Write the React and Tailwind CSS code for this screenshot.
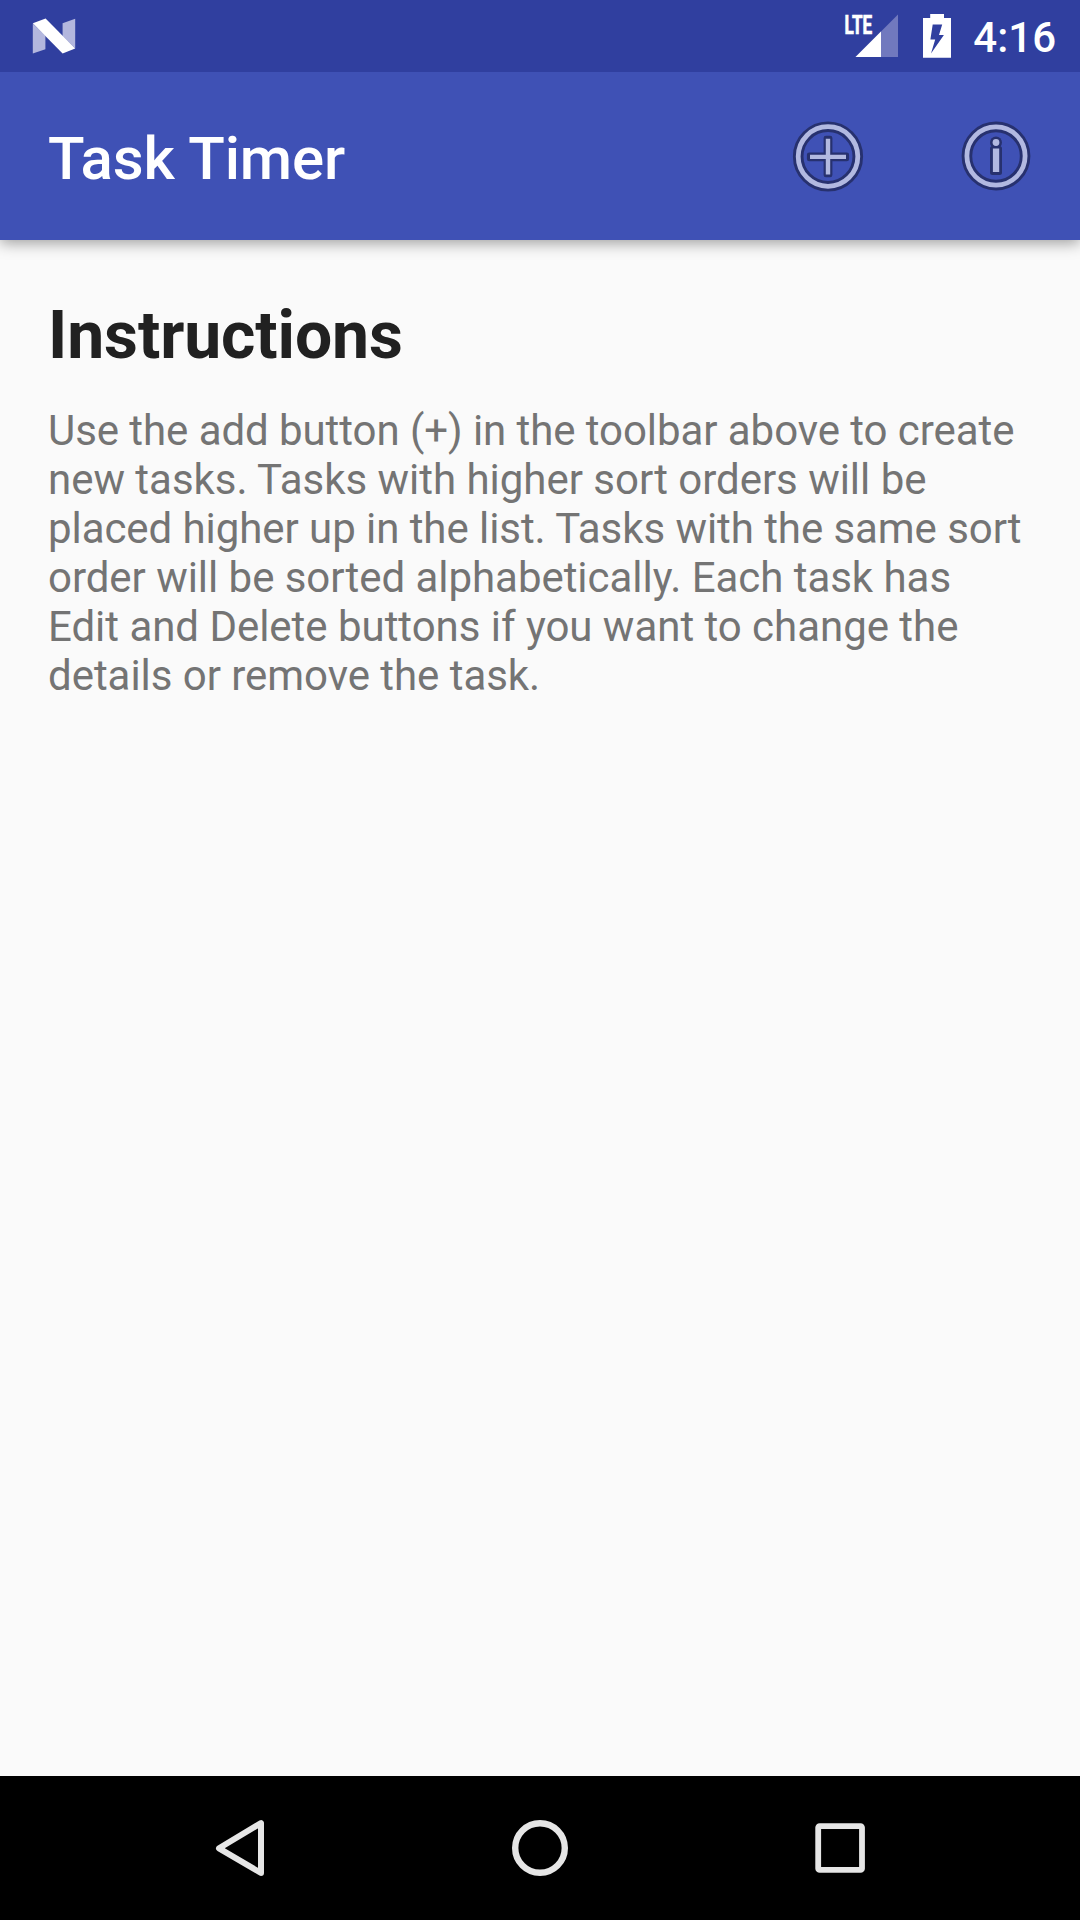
const HALO = '#27316f';
const ICON = '#b2b9e1';
const NAV = '#e6e6e6';

function NougatLogo() {
  return (
    <svg className="ml-8 h-[72px] w-11" viewBox="32 0 44 72" aria-hidden="true">
      <path d="M32.8 23.4V53.4L45.4 49.2V35.8Z" fill="#b3b7de" />
      <path d="M62.6 23.2L75.2 18.7V48.6L62.6 36Z" fill="#b3b7de" />
      <path d="M32.8 23.2L45.6 18.4L75.2 48.5L62.6 53.5Z" fill="#fff" />
    </svg>
  );
}

function Signal() {
  return (
    <svg className="h-[72px] w-14" viewBox="844 0 56 72" aria-label="LTE signal">
      <path d="M855.5 57L898 14.5V57Z" fill="#7179be" />
      <path d="M855.5 57L881 31.5V57Z" fill="#fff" />
      <text
        x="844.6"
        y="33.6"
        fill="#fff"
        stroke="#fff"
        strokeWidth="0.7"
        className="font-['Roboto',sans-serif] text-[25px] font-bold"
        textLength="27.6"
        lengthAdjust="spacingAndGlyphs"
      >
        LTE
      </text>
    </svg>
  );
}

function Battery() {
  return (
    <svg className="h-[72px] w-7" viewBox="923 0 28 72" aria-label="Battery charging">
      <path
        fillRule="evenodd"
        fill="#fff"
        d="M930.2 14H944V18H951V57.7H923V18H930.2ZM932.7 24.6L930.4 39.4H935.2L931 53.6L943.9 35H939L942.2 24.6Z"
      />
    </svg>
  );
}

function AddIcon() {
  return (
    <svg className="size-24" viewBox="780 108 96 96" fill="none" aria-hidden="true">
      <circle cx="828" cy="156.5" r="29.8" stroke={HALO} strokeWidth="10.6" />
      <circle cx="828" cy="156.5" r="29.8" stroke={ICON} strokeWidth="4.8" />
      <path
        d="M809.2 154.8H825.9V138H830.1V154.8H846.8V159H830.1V175H825.9V159H809.2Z"
        fill={HALO}
        stroke={HALO}
        strokeWidth="4.6"
        strokeLinejoin="round"
      />
      <path d="M810 156.9H846M828 138.7V174.5" stroke={ICON} strokeWidth="4.4" />
    </svg>
  );
}

function InfoIcon() {
  return (
    <svg className="size-24" viewBox="948 108 96 96" fill="none" aria-hidden="true">
      <circle cx="996" cy="156" r="29.1" stroke={HALO} strokeWidth="10.6" />
      <circle cx="996" cy="156" r="29.1" stroke={ICON} strokeWidth="4.8" />
      <circle cx="996" cy="142.5" r="6" fill={HALO} />
      <rect x="990" y="146" width="12" height="29" rx="2.5" fill={HALO} />
      <circle cx="996" cy="142.5" r="3.4" fill={ICON} />
      <rect x="992.9" y="148.5" width="6.3" height="23.5" fill={ICON} />
    </svg>
  );
}

function StatusBar() {
  return (
    <header className="z-20 flex h-[72px] shrink-0 items-center justify-between bg-[#303f9f]">
      <NougatLogo />
      <div className="flex items-center pr-6">
        <Signal />
        <div className="w-[23px]" />
        <Battery />
        <time className="ml-[22px] pt-[3px] text-[42px] leading-[49px] font-medium">4:16</time>
      </div>
    </header>
  );
}

function AppBar() {
  return (
    <div className="z-10 flex h-[168px] shrink-0 items-center justify-between bg-[#3f51b5] pr-9 pl-12 shadow-[0_3px_14px_rgba(0,0,0,0.38)]">
      <h1 className="pt-[5px] text-[60px] leading-[71px] font-medium tracking-[-0.1px]">Task Timer</h1>
      <div className="flex gap-[72px]">
        <button aria-label="Add task"><AddIcon /></button>
        <button aria-label="About"><InfoIcon /></button>
      </div>
    </div>
  );
}

function NavBar() {
  return (
    <nav className="flex h-36 shrink-0 items-center justify-center gap-[204px] bg-black">
      <button aria-label="Back">
        <svg className="size-24" viewBox="192 1800 96 96" fill="none">
          <path d="M261 1823.1V1873L219 1848.3Z" stroke={NAV} strokeWidth="6" strokeLinejoin="round" />
        </svg>
      </button>
      <button aria-label="Home">
        <svg className="size-24" viewBox="492 1800 96 96" fill="none">
          <circle cx="540" cy="1848" r="24.8" stroke={NAV} strokeWidth="6.4" />
        </svg>
      </button>
      <button aria-label="Recent apps">
        <svg className="size-24" viewBox="792 1800 96 96" fill="none">
          <rect x="818.2" y="1826.1" width="43.8" height="43.8" rx="1.5" stroke={NAV} strokeWidth="5.8" />
        </svg>
      </button>
    </nav>
  );
}

export default function App() {
  return (
    <div className="flex h-[1920px] w-[1080px] flex-col overflow-hidden bg-[#fafafa] font-['Roboto',sans-serif] text-white">
      <StatusBar />
      <AppBar />
      <main className="flex-1 px-12 pt-[57px]">
        <h2 className="text-[66px] leading-[77px] font-bold tracking-[-0.1px] text-[#212121]">Instructions</h2>
        <p className="mt-8 text-[42px] leading-[49px] text-[#747474]">
          <span className="tracking-[-0.066px]">Use the add button (+) in the toolbar above to create</span><br />
          <span className="tracking-[-0.025px]">new tasks. Tasks with higher sort orders will be</span><br />
          <span className="tracking-[-0.064px]">placed higher up in the list. Tasks with the same sort</span><br />
          <span className="tracking-[-0.04px]">order will be sorted alphabetically. Each task has</span><br />
          <span className="tracking-[-0.03px]">Edit and Delete buttons if you want to change the</span><br />
          <span className="tracking-[-0.04px]">details or remove the task.</span>
        </p>
      </main>
      <NavBar />
    </div>
  );
}
